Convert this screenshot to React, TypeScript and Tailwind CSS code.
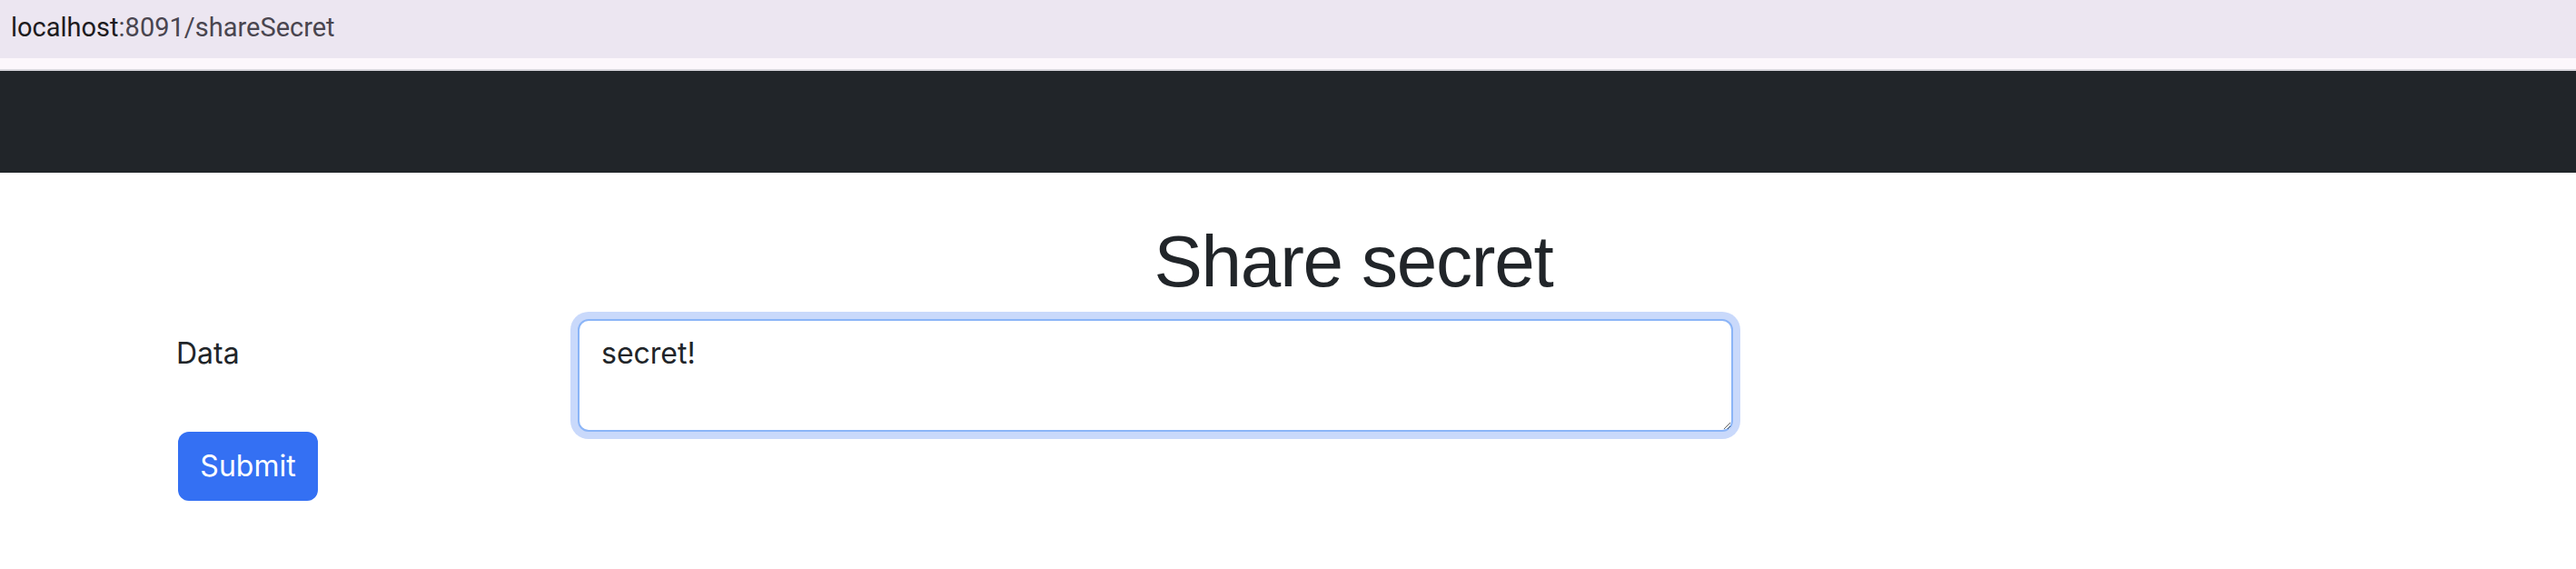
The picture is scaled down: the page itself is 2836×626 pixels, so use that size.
import { useState } from "react";

export default function App() {
  const [data, setData] = useState("secret!");

  return (
    <div className="min-h-[626px] bg-white text-[#212529]" style={{ fontFamily: "Inter, 'Noto Sans', sans-serif" }}>
      {/* browser address bar */}
      <div className="h-[64px] bg-[#ece6f1] pl-[12px] pt-[16px]">
        <p className="text-[29px] leading-[29px] text-[#49454f]" style={{ fontFamily: "Roboto, 'Noto Sans', sans-serif" }}>
          <span className="text-[#1d1b20]">localhost</span>:8091/shareSecret
        </p>
      </div>
      <div className="h-[12px] bg-[#fcf7fc]" />
      <div className="h-[2px] bg-[#d9d7dd]" />

      <nav className="h-[112px] bg-[#212529]" />

      <main>
        <div className="mt-[50px] flex justify-center pl-[144px]">
          <h1
            className="text-[80px] font-normal leading-[96px] tracking-[-1.2px] text-[#212529]"
            style={{ fontFamily: "'Liberation Sans', Arial, sans-serif" }}
          >
            Share secret
          </h1>
        </div>

        <form className="mt-[15px]" onSubmit={(e) => e.preventDefault()}>
          <div className="flex items-start pl-[194px]">
            <label htmlFor="data" className="w-[442px] pt-[14px] text-[32px] leading-[48px]">
              Data
            </label>
            <textarea
              id="data"
              value={data}
              onChange={(e) => setData(e.target.value)}
              className="h-[124px] w-[1272px] rounded-[12px] border-2 border-[#8bb5f7] bg-white px-[24px] py-[12px] text-[32px] leading-[48px] text-[#212529] shadow-[0_0_0_8px_#c9d9fb] outline-none"
            />
          </div>
          <button
            type="submit"
            className="ml-[196px] h-[76px] w-[154px] rounded-[12px] bg-[#3470f3] text-[32px] leading-[48px] text-white"
          >
            Submit
          </button>
        </form>
      </main>
    </div>
  );
}
